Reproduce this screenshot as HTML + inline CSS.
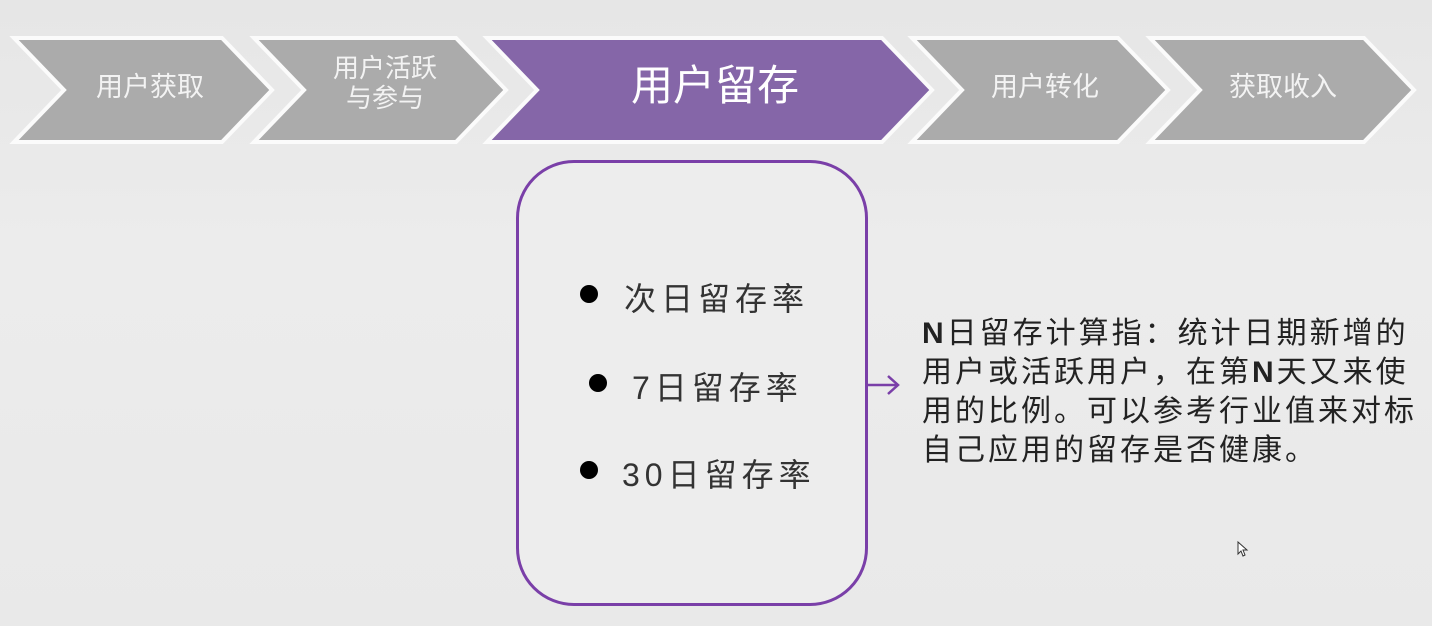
<!DOCTYPE html>
<html><head><meta charset="utf-8"><style>
html,body{margin:0;padding:0}
body{width:1432px;height:626px;overflow:hidden;background:linear-gradient(180deg,#e6e6e6 0%,#ececec 40%,#e9e9e9 100%);font-family:"Liberation Sans","Noto Sans CJK SC",sans-serif;position:relative}
svg{position:absolute;left:0;top:0}
.t{position:absolute;color:#fff;text-align:center;line-height:1.15}
.box{position:absolute;left:516px;top:160px;width:346px;height:440px;border:3px solid #7a3fa8;border-radius:58px;background:#ededed}
.row{position:absolute;font-size:32px;color:#333;letter-spacing:5px;white-space:nowrap}
.dot{position:absolute;width:18px;height:18px;border-radius:50%;background:#000}
.desc{position:absolute;left:922px;top:314px;font-size:30px;line-height:39px;color:#222;letter-spacing:3px;white-space:nowrap}
</style></head><body>
<svg width="1432" height="626">
<g stroke="#fbfbfb" stroke-width="4" stroke-linejoin="miter">
<polygon points="14,38 222,38 272,90 222,142 14,142 64,90" fill="#ababab"/>
<polygon points="254,38 456,38 506,90 456,142 254,142 304,90" fill="#ababab"/>
<polygon points="487,38 882,38 932,90 882,142 487,142 537,90" fill="#8566a8"/>
<polygon points="912,38 1118,38 1168,90 1118,142 912,142 962,90" fill="#ababab"/>
<polygon points="1150,38 1364,38 1414,90 1364,142 1150,142 1200,90" fill="#ababab"/>
</g>
<line x1="852" y1="385" x2="898" y2="385" stroke="#7a3fa8" stroke-width="2.5"/>
<polyline points="888,376 898,385 888,394" fill="none" stroke="#7a3fa8" stroke-width="2.5"/>
<path d="M1238 542 v12 l3 -3 l2 5 l2 -1 l-2 -5 h4 z" fill="#fff" stroke="#333" stroke-width="1"/>
</svg>
<div class="t" style="left:60px;width:180px;top:72px;font-size:27px;color:#f3f3f3">用户获取</div>
<div class="t" style="left:295px;width:180px;top:54px;font-size:26px;color:#f3f3f3">用户活跃<br>与参与</div>
<div class="t" style="left:560px;width:310px;top:62px;font-size:42px">用户留存</div>
<div class="t" style="left:955px;width:180px;top:72px;font-size:27px;color:#f3f3f3">用户转化</div>
<div class="t" style="left:1193px;width:180px;top:72px;font-size:27px;color:#f3f3f3">获取收入</div>
<div class="box"></div>
<div class="dot" style="left:580px;top:285px"></div>
<div class="row" style="left:624px;top:274px">次日留存率</div>
<div class="dot" style="left:589px;top:374px"></div>
<div class="row" style="left:632px;top:363px">7日留存率</div>
<div class="dot" style="left:580px;top:461px"></div>
<div class="row" style="left:622px;top:450px">30日留存率</div>
<div class="desc"><b style="font-weight:bold">N</b>日留存计算指：统计日期新增的<br>用户或活跃用户，在第<b>N</b>天又来使<br>用的比例。可以参考行业值来对标<br>自己应用的留存是否健康。</div>
</body></html>
